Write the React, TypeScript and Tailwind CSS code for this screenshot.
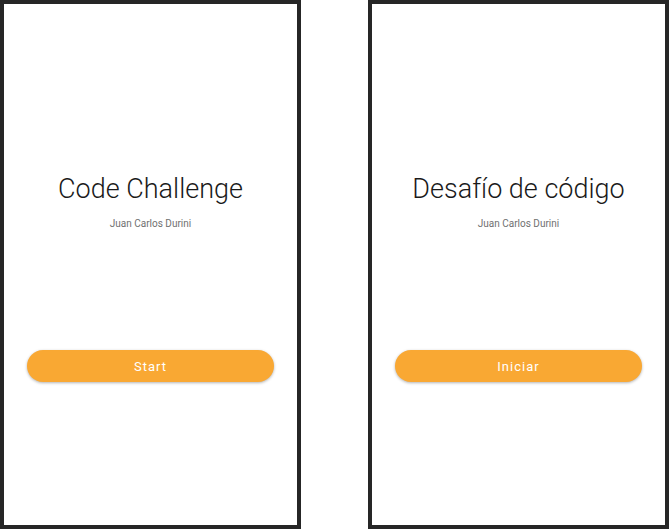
import React from "react";

function Phone({ title, button }: { title: string; button: string }) {
  return (
    <div className="w-[301px] h-[529px] border-4 border-[#262626] bg-white flex flex-col items-center pt-[170px] px-[23px] font-['Roboto',sans-serif]">
      <div className="text-[27px] leading-[31px] font-light text-[#1a1a1a]">{title}</div>
      <div className="mt-[12px] text-[10px] leading-[14px] text-[#707070]">Juan Carlos Durini</div>
      <button className="mt-[119px] w-full h-[32px] pt-px rounded-full bg-[#F9A833] text-white text-[13px] tracking-[1px] shadow-[0_1px_3px_rgba(0,0,0,0.3)]">
        {button}
      </button>
    </div>
  );
}

export default function App() {
  return (
    <div className="w-[669px] h-[529px] bg-white flex justify-between">
      <Phone title="Code Challenge" button="Start" />
      <Phone title="Desafío de código" button="Iniciar" />
    </div>
  );
}
